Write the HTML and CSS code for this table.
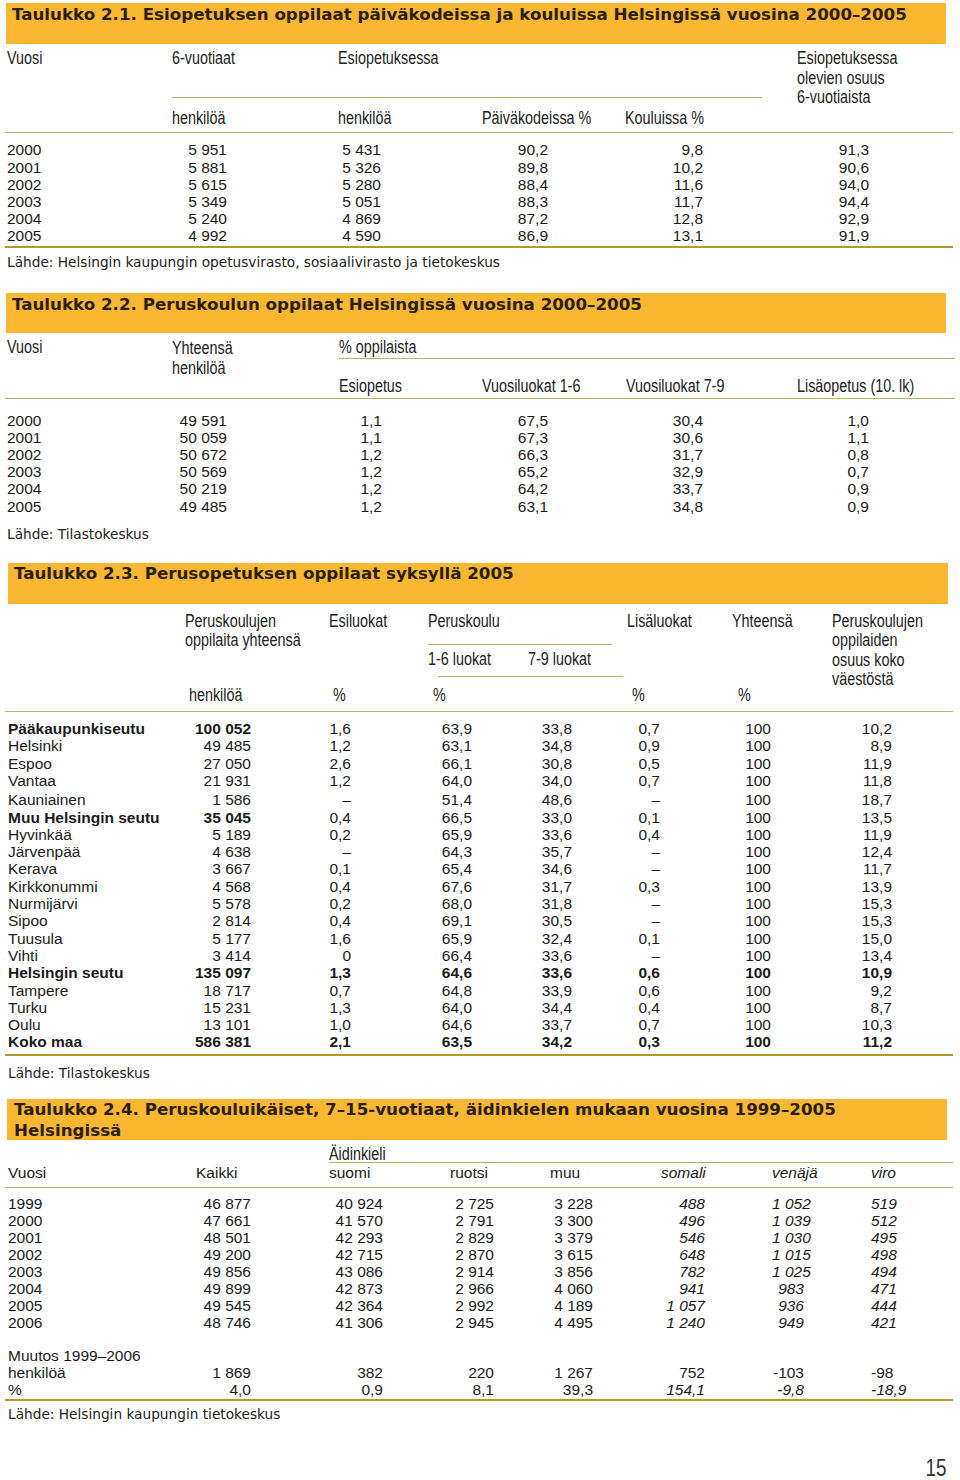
FILE: index.html
```html
<!DOCTYPE html>
<html lang="fi">
<head>
<meta charset="utf-8">
<title>Taulukot 2.1–2.4</title>
<link rel="stylesheet" href="styles.css">
</head>
<body>
<div class="page">

<section class="blk b1">
  <h2 class="bar">Taulukko 2.1. Esiopetuksen oppilaat päiväkodeissa ja kouluissa Helsingissä vuosina 2000–2005</h2>
  <table class="t t1">
    <colgroup><col class="w1"><col class="w2"><col class="w3"><col class="w4"><col class="w5"><col class="w6"></colgroup>
    <thead>
      <tr>
        <th rowspan="2" class="vu p5"><span class="n">Vuosi</span></th>
        <th><div class="ul"><span class="n">6-vuotiaat</span></div></th>
        <th colspan="3"><div class="ul ul-short"><span class="n">Esiopetuksessa</span></div></th>
        <th rowspan="2" class="p5"><span class="n">Esiopetuksessa<br>olevien osuus<br>6-vuotiaista</span></th>
      </tr>
      <tr class="r2">
        <th><span class="n">henkilöä</span></th><th><span class="n">henkilöä</span></th><th><span class="n">Päiväkodeissa %</span></th><th><span class="n">Kouluissa %</span></th>
      </tr>
    </thead>
    <tbody>
      <tr><td>2000</td><td>5 951</td><td>5 431</td><td>90,2</td><td>9,8</td><td>91,3</td></tr>
      <tr><td>2001</td><td>5 881</td><td>5 326</td><td>89,8</td><td>10,2</td><td>90,6</td></tr>
      <tr><td>2002</td><td>5 615</td><td>5 280</td><td>88,4</td><td>11,6</td><td>94,0</td></tr>
      <tr><td>2003</td><td>5 349</td><td>5 051</td><td>88,3</td><td>11,7</td><td>94,4</td></tr>
      <tr><td>2004</td><td>5 240</td><td>4 869</td><td>87,2</td><td>12,8</td><td>92,9</td></tr>
      <tr><td>2005</td><td>4 992</td><td>4 590</td><td>86,9</td><td>13,1</td><td>91,9</td></tr>
    </tbody>
  </table>
  <p class="src s1">Lähde: Helsingin kaupungin opetusvirasto, sosiaalivirasto ja tietokeskus</p>
</section>

<section class="blk b2">
  <h2 class="bar">Taulukko 2.2. Peruskoulun oppilaat Helsingissä vuosina 2000–2005</h2>
  <table class="t t2">
    <colgroup><col class="w1"><col class="w2"><col class="w3"><col class="w4"><col class="w5"><col class="w6"></colgroup>
    <thead>
      <tr>
        <th rowspan="2" class="vu p5"><span class="n">Vuosi</span></th>
        <th rowspan="2" class="p5 yh"><span class="n">Yhteensä<br>henkilöä</span></th>
        <th colspan="4" class="pct"><span class="n">% oppilaista</span></th>
      </tr>
      <tr class="r2">
        <th><span class="n">Esiopetus</span></th><th><span class="n">Vuosiluokat 1-6</span></th><th><span class="n">Vuosiluokat 7-9</span></th><th><span class="n">Lisäopetus (10. lk)</span></th>
      </tr>
    </thead>
    <tbody>
      <tr><td>2000</td><td>49 591</td><td>1,1</td><td>67,5</td><td>30,4</td><td>1,0</td></tr>
      <tr><td>2001</td><td>50 059</td><td>1,1</td><td>67,3</td><td>30,6</td><td>1,1</td></tr>
      <tr><td>2002</td><td>50 672</td><td>1,2</td><td>66,3</td><td>31,7</td><td>0,8</td></tr>
      <tr><td>2003</td><td>50 569</td><td>1,2</td><td>65,2</td><td>32,9</td><td>0,7</td></tr>
      <tr><td>2004</td><td>50 219</td><td>1,2</td><td>64,2</td><td>33,7</td><td>0,9</td></tr>
      <tr><td>2005</td><td>49 485</td><td>1,2</td><td>63,1</td><td>34,8</td><td>0,9</td></tr>
    </tbody>
  </table>
  <p class="src s2">Lähde: Tilastokeskus</p>
</section>

<section class="blk b3">
  <h2 class="bar">Taulukko 2.3. Perusopetuksen oppilaat syksyllä 2005</h2>
  <table class="t t3">
    <colgroup><col class="w1"><col class="w2"><col class="w3"><col class="w4"><col class="w5"><col class="w6"><col class="w7"><col class="w8"></colgroup>
    <thead>
      <tr class="r1">
        <th rowspan="3"></th>
        <th rowspan="2"><span class="n">Peruskoulujen<br>oppilaita yhteensä</span></th>
        <th rowspan="2"><span class="n">Esiluokat</span></th>
        <th colspan="2" class="pk"><div class="ul"><span class="n">Peruskoulu</span></div></th>
        <th rowspan="2"><span class="n">Lisäluokat</span></th>
        <th rowspan="2"><span class="n">Yhteensä</span></th>
        <th rowspan="3"><span class="n">Peruskoulujen<br>oppilaiden<br>osuus koko<br>väestöstä</span></th>
      </tr>
      <tr class="r2">
        <th colspan="2" class="lk"><div class="ul"><span class="n l16">1-6 luokat</span><span class="n">7-9 luokat</span></div></th>
      </tr>
      <tr class="r3">
        <th class="u4"><span class="n">henkilöä</span></th><th class="u4"><span class="n">%</span></th><th class="u5"><span class="n">%</span></th><th></th><th class="u5"><span class="n">%</span></th><th class="u6"><span class="n">%</span></th>
      </tr>
    </thead>
    <tbody>
      <tr><td class="b">Pääkaupunkiseutu</td><td class="b">100 052</td><td>1,6</td><td>63,9</td><td>33,8</td><td>0,7</td><td>100</td><td>10,2</td></tr>
      <tr><td>Helsinki</td><td>49 485</td><td>1,2</td><td>63,1</td><td>34,8</td><td>0,9</td><td>100</td><td>8,9</td></tr>
      <tr><td>Espoo</td><td>27 050</td><td>2,6</td><td>66,1</td><td>30,8</td><td>0,5</td><td>100</td><td>11,9</td></tr>
      <tr><td>Vantaa</td><td>21 931</td><td>1,2</td><td>64,0</td><td>34,0</td><td>0,7</td><td>100</td><td>11,8</td></tr>
      <tr class="gap"><td>Kauniainen</td><td>1 586</td><td>–</td><td>51,4</td><td>48,6</td><td>–</td><td>100</td><td>18,7</td></tr>
      <tr><td class="b">Muu Helsingin seutu</td><td class="b">35 045</td><td>0,4</td><td>66,5</td><td>33,0</td><td>0,1</td><td>100</td><td>13,5</td></tr>
      <tr><td>Hyvinkää</td><td>5 189</td><td>0,2</td><td>65,9</td><td>33,6</td><td>0,4</td><td>100</td><td>11,9</td></tr>
      <tr><td>Järvenpää</td><td>4 638</td><td>–</td><td>64,3</td><td>35,7</td><td>–</td><td>100</td><td>12,4</td></tr>
      <tr><td>Kerava</td><td>3 667</td><td>0,1</td><td>65,4</td><td>34,6</td><td>–</td><td>100</td><td>11,7</td></tr>
      <tr><td>Kirkkonummi</td><td>4 568</td><td>0,4</td><td>67,6</td><td>31,7</td><td>0,3</td><td>100</td><td>13,9</td></tr>
      <tr><td>Nurmijärvi</td><td>5 578</td><td>0,2</td><td>68,0</td><td>31,8</td><td>–</td><td>100</td><td>15,3</td></tr>
      <tr><td>Sipoo</td><td>2 814</td><td>0,4</td><td>69,1</td><td>30,5</td><td>–</td><td>100</td><td>15,3</td></tr>
      <tr><td>Tuusula</td><td>5 177</td><td>1,6</td><td>65,9</td><td>32,4</td><td>0,1</td><td>100</td><td>15,0</td></tr>
      <tr><td>Vihti</td><td>3 414</td><td>0</td><td>66,4</td><td>33,6</td><td>–</td><td>100</td><td>13,4</td></tr>
      <tr class="bold"><td>Helsingin seutu</td><td>135 097</td><td>1,3</td><td>64,6</td><td>33,6</td><td>0,6</td><td>100</td><td>10,9</td></tr>
      <tr><td>Tampere</td><td>18 717</td><td>0,7</td><td>64,8</td><td>33,9</td><td>0,6</td><td>100</td><td>9,2</td></tr>
      <tr><td>Turku</td><td>15 231</td><td>1,3</td><td>64,0</td><td>34,4</td><td>0,4</td><td>100</td><td>8,7</td></tr>
      <tr><td>Oulu</td><td>13 101</td><td>1,0</td><td>64,6</td><td>33,7</td><td>0,7</td><td>100</td><td>10,3</td></tr>
      <tr class="bold"><td>Koko maa</td><td>586 381</td><td>2,1</td><td>63,5</td><td>34,2</td><td>0,3</td><td>100</td><td>11,2</td></tr>
    </tbody>
  </table>
  <p class="src s3">Lähde: Tilastokeskus</p>
</section>

<section class="blk b4">
  <h2 class="bar">Taulukko 2.4. Peruskouluikäiset, 7–15-vuotiaat, äidinkielen mukaan vuosina 1999–2005 Helsingissä</h2>
  <table class="t t4">
    <colgroup><col class="w1"><col class="w2"><col class="w3"><col class="w4"><col class="w5"><col class="w6"><col class="w7"><col class="w8"></colgroup>
    <thead>
      <tr class="r1">
        <th colspan="2"></th>
        <th colspan="6" class="ai"><span class="n">Äidinkieli</span></th>
      </tr>
      <tr class="r2">
        <th class="vu">Vuosi</th><th>Kaikki</th><th>suomi</th><th>ruotsi</th><th>muu</th><th class="i">somali</th><th class="i">venäjä</th><th class="i">viro</th>
      </tr>
    </thead>
    <tbody>
      <tr class="it"><td>1999</td><td>46 877</td><td>40 924</td><td>2 725</td><td>3 228</td><td>488</td><td>1 052</td><td>519</td></tr>
      <tr class="it"><td>2000</td><td>47 661</td><td>41 570</td><td>2 791</td><td>3 300</td><td>496</td><td>1 039</td><td>512</td></tr>
      <tr class="it"><td>2001</td><td>48 501</td><td>42 293</td><td>2 829</td><td>3 379</td><td>546</td><td>1 030</td><td>495</td></tr>
      <tr class="it"><td>2002</td><td>49 200</td><td>42 715</td><td>2 870</td><td>3 615</td><td>648</td><td>1 015</td><td>498</td></tr>
      <tr class="it"><td>2003</td><td>49 856</td><td>43 086</td><td>2 914</td><td>3 856</td><td>782</td><td>1 025</td><td>494</td></tr>
      <tr class="it"><td>2004</td><td>49 899</td><td>42 873</td><td>2 966</td><td>4 060</td><td>941</td><td>983</td><td>471</td></tr>
      <tr class="it"><td>2005</td><td>49 545</td><td>42 364</td><td>2 992</td><td>4 189</td><td>1 057</td><td>936</td><td>444</td></tr>
      <tr class="it"><td>2006</td><td>48 746</td><td>41 306</td><td>2 945</td><td>4 495</td><td>1 240</td><td>949</td><td>421</td></tr>
      <tr class="mu"><td colspan="8">Muutos 1999–2006</td></tr>
      <tr><td>henkilöä</td><td>1 869</td><td>382</td><td>220</td><td>1 267</td><td>752</td><td>-103</td><td>-98</td></tr>
      <tr class="it"><td>%</td><td>4,0</td><td>0,9</td><td>8,1</td><td>39,3</td><td>154,1</td><td>-9,8</td><td>-18,9</td></tr>
    </tbody>
  </table>
  <p class="src s4">Lähde: Helsingin kaupungin tietokeskus</p>
</section>

<div class="pno"><span class="pn">15</span></div>
</div>
</body>
</html>
```

FILE: styles.css
```css
* { box-sizing: border-box; }

body {
  margin: 0;
  background: #ffffff;
  color: #1b1b1b;
  font-family: "Liberation Sans", Arial, sans-serif;
}

.page {
  width: 960px;
  padding-top: 3px;
}

/* title bars */
.bar {
  margin: 0 0 0 6px;
  width: 940px;
  height: 41px;
  padding: 0.5px 6px 0;
  background: #f9b732;
  color: #2a1e08;
  font: bold 16.7px/21px "DejaVu Sans", Verdana, sans-serif;
}
.b2 .bar { margin-top: 23px; height: 40px; }
.b3 .bar { margin-top: 21px; margin-left: 8px; padding-left: 6px; }
.b4 .bar { margin-top: 18px; margin-left: 7px; padding-left: 7px; }

/* tables */
.t {
  margin-left: 5px;
  width: 948px;
  border-collapse: separate;
  border-spacing: 0;
  table-layout: fixed;
}
.t th {
  padding: 0;
  font-family: "Liberation Sans", Arial, sans-serif;
  font-size: 17.5px;
  line-height: 19.5px;
  font-weight: normal;
  text-align: left;
  vertical-align: top;
  color: #222;
  white-space: nowrap;
}
/* narrow (condensed) header lettering */
.n {
  display: inline-block;
  transform: scaleX(0.82);
  transform-origin: 0 50%;
  white-space: nowrap;
}
.t td {
  padding: 0;
  font-size: 15.5px;
  line-height: 17.2px;
  text-align: right;
  white-space: nowrap;
  color: #1b1b1b;
}
.t td:first-child { text-align: left; }
.t tbody tr:first-child td { border-top: 1px solid #bbb070; }
.t tbody tr:last-child td { border-bottom: 2px solid #b8972c; }

.ul { border-bottom: 1px solid #bbb070; }
.vu { padding-left: 2px !important; }
.p5 { padding-top: 5px !important; }

/* table 2.1 */
.t1 .w1 { width: 167px; }
.t1 .w2 { width: 166px; }
.t1 .w3 { width: 144px; }
.t1 .w4 { width: 143px; }
.t1 .w5 { width: 172px; }
.t1 .w6 { width: 156px; }
.t1 .ul { padding: 5px 0 28px; }
.t1 .ul-short { margin-right: 35px; }
.t1 .r2 th { padding: 11px 0 4px; }
.t1 td:first-child { padding-left: 2px; }
.t1 td:nth-child(2) { padding-right: 111px; }
.t1 td:nth-child(3) { padding-right: 101px; }
.t1 td:nth-child(4) { padding-right: 77px; }
.t1 td:nth-child(5) { padding-right: 94px; }
.t1 td:nth-child(6) { padding-right: 84px; }
.t1 tbody tr:first-child td { padding-top: 8.4px; }
.t1 tbody tr:last-child td { padding-bottom: 1.5px; }

.src {
  margin: 6px 0 0 7px;
  font: 13.7px/16px "DejaVu Sans", Verdana, sans-serif;
  color: #222;
}

/* table 2.2 */
.t2 { width: 950px; }
.t2 .w1 { width: 167px; }
.t2 .w2 { width: 167px; }
.t2 .w3 { width: 143px; }
.t2 .w4 { width: 144px; }
.t2 .w5 { width: 171px; }
.t2 .w6 { width: 158px; }
.t2 .yh { line-height: 20px; }
.t2 .pct { padding: 5px 0 0; border-bottom: 1px solid #bbb070; }
.t2 .r2 th { padding: 18px 0 1.5px; }
.t2 td:first-child { padding-left: 2px; }
.t2 td:nth-child(2) { padding-right: 112px; }
.t2 td:nth-child(3) { padding-right: 100px; }
.t2 td:nth-child(4) { padding-right: 78px; }
.t2 td:nth-child(5) { padding-right: 94px; }
.t2 td:nth-child(6) { padding-right: 86px; }
.t2 tbody tr:first-child td { padding-top: 12.9px; }
.t2 tbody tr:last-child td { border-bottom: 0; }
.s2 { margin-top: 11px; }

/* table 2.3 */
.t3 .w1 { width: 180px; }
.t3 .w2 { width: 144px; }
.t3 .w3 { width: 99px; }
.t3 .w4 { width: 100px; }
.t3 .w5 { width: 99px; }
.t3 .w6 { width: 105px; }
.t3 .w7 { width: 100px; }
.t3 .w8 { width: 121px; }
.t3 .r1 th { padding-top: 8px; }
.t3 .r1 .pk { padding-top: 0; }
.t3 .pk .ul { padding: 8px 0 13px; margin-right: 15px; }
.t3 .lk .ul { display: flex; padding: 5px 0 6px; margin: 0 4px 0 10px; }
.t3 .lk .l16 { width: 100px; margin-left: -10px; flex: none; }
.t3 .r3 th { padding: 9px 0 5.5px; }
.t3 .r3 .u4 { padding-left: 4px; }
.t3 .r3 .u5 { padding-left: 5px; }
.t3 .r3 .u6 { padding-left: 6px; }
.t3 td { line-height: 17.3px; }
.t3 td:first-child { padding-left: 3px; }
.t3 td:nth-child(2) { padding-right: 78px; }
.t3 td:nth-child(3) { padding-right: 77px; }
.t3 td:nth-child(4) { padding-right: 56px; }
.t3 td:nth-child(5) { padding-right: 55px; }
.t3 td:nth-child(6) { padding-right: 72px; }
.t3 td:nth-child(7) { padding-right: 61px; }
.t3 td:nth-child(8) { padding-right: 61px; }
.t3 tbody tr:first-child td { padding-top: 8.4px; }
.t3 tbody tr.gap td { padding-top: 2px; }
.t3 tbody tr:last-child td { padding-bottom: 3px; }
.t3 td.b, .t3 .bold td { font-weight: bold; }
.s3 { margin-top: 9px; margin-left: 8px; }

/* table 2.4 */
.t4 .w1 { width: 191px; }
.t4 .w2 { width: 133px; }
.t4 .w3 { width: 121px; }
.t4 .w4 { width: 100px; }
.t4 .w5 { width: 111px; }
.t4 .w6 { width: 111px; }
.t4 .w7 { width: 99px; }
.t4 .w8 { width: 82px; }
.t4 .r1 th { padding: 6px 0 0; line-height: 16px; }
.t4 .r1 .ai { border-bottom: 1px solid #bbb070; }
.t4 .r2 th { padding: 0 0 5px; font-size: 15.5px; color: #1b1b1b; }
.t4 .r2 .vu { padding-left: 3px !important; }
.t4 th.i { font-style: italic; }
.t4 td { line-height: 17px; }
.t4 td:first-child { padding-left: 3px; }
.t4 td:nth-child(2) { padding-right: 78px; }
.t4 td:nth-child(3) { padding-right: 67px; }
.t4 td:nth-child(4) { padding-right: 56px; }
.t4 td:nth-child(5) { padding-right: 68px; }
.t4 td:nth-child(6) { padding-right: 67px; }
.t4 td:nth-child(7) { padding-right: 67px; }
.t4 td:nth-child(8) { padding-right: 60px; }
.t4 .it td:nth-child(n+6) { font-style: italic; }
.t4 tbody tr:first-child td { padding-top: 7px; }
.t4 tbody tr.mu td { padding-top: 16px; }
.t4 tbody tr:last-child td { padding-bottom: 1px; }
.s4 { margin-top: 4.5px; margin-left: 8px; }

/* page number */
.pno {
  margin-top: 36px;
  padding-right: 13px;
  text-align: right;
  font: 23px/20px "Liberation Sans", Arial, sans-serif;
  color: #333;
}
.pn {
  display: inline-block;
  transform: scaleX(0.82);
  transform-origin: 100% 50%;
}
```
